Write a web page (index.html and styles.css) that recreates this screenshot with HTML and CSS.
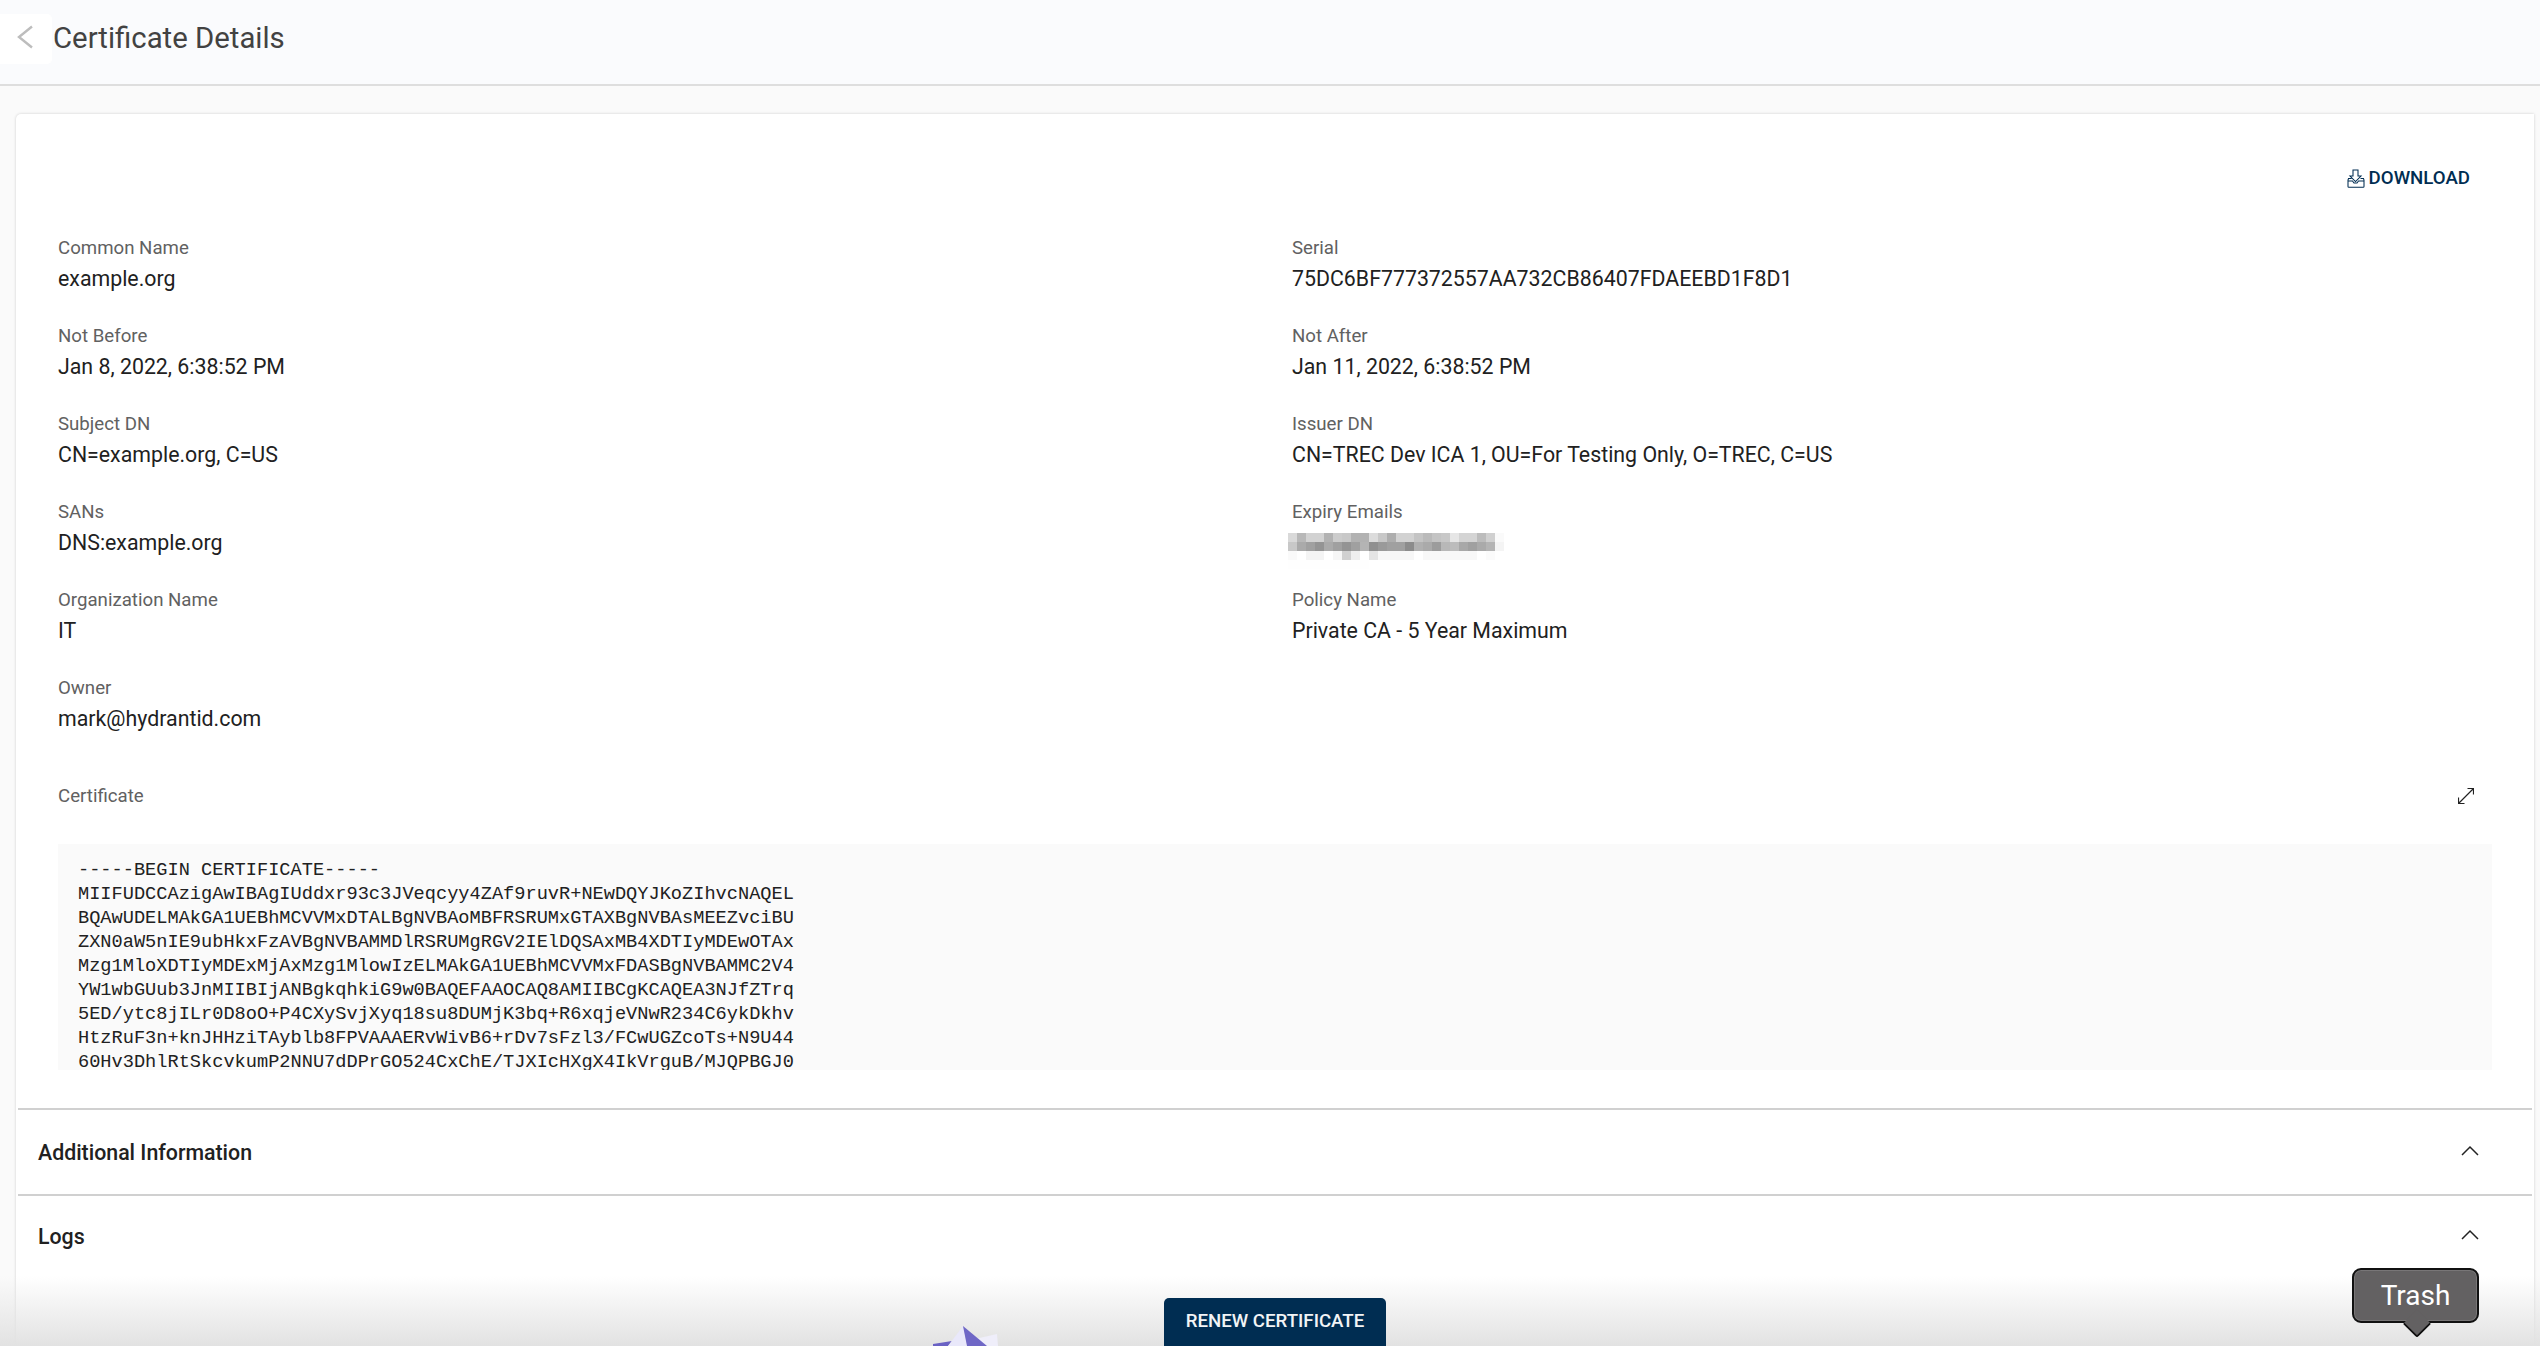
FILE: index.html
```html
<!DOCTYPE html>
<html lang="en">
<head>
<meta charset="utf-8">
<title>Certificate Details</title>
<link rel="stylesheet" href="styles.css">
</head>
<body>
<header class="topbar">
  <button class="back" aria-label="Back">
    <svg width="16" height="24" viewBox="0 0 16 24"><path d="M15 1.500 2 12 15 22.500" fill="none" stroke="#bdbdbd" stroke-width="2.400"/></svg>
  </button>
  <h1 class="title">Certificate Details</h1>
</header>
<main class="card">
  <div class="actions">
    <a class="download">
      <svg width="18" height="19" viewBox="0 0 18 19"><path d="M6 1h5v6h3l-5.500 5.500L3 7h3zM4.500 9.500H1.500L1 11v6.500q0 .8.8.8h14.400q.8 0 .8-.8V11l-.5-1.500h-3M1 12h4.500l1.500 2h3l1.500-2H17" fill="none" stroke="#002d52" stroke-width="1.050"/></svg>
      DOWNLOAD
    </a>
  </div>
  <section class="fields">
    <div class="field"><div class="label">Common Name</div><div class="value">example.org</div></div>
    <div class="field"><div class="label">Serial</div><div class="value">75DC6BF777372557AA732CB86407FDAEEBD1F8D1</div></div>
    <div class="field"><div class="label">Not Before</div><div class="value">Jan 8, 2022, 6:38:52 PM</div></div>
    <div class="field"><div class="label">Not After</div><div class="value">Jan 11, 2022, 6:38:52 PM</div></div>
    <div class="field"><div class="label">Subject DN</div><div class="value">CN=example.org, C=US</div></div>
    <div class="field"><div class="label">Issuer DN</div><div class="value">CN=TREC Dev ICA 1, OU=For Testing Only, O=TREC, C=US</div></div>
    <div class="field"><div class="label">SANs</div><div class="value">DNS:example.org</div></div>
    <div class="field"><div class="label">Expiry Emails</div><div class="redacted">
      <svg width="216" height="36" viewBox="0 0 24 4" shape-rendering="crispEdges">
        <rect x="0" y="0" width="1" height="1" fill="#d9d9d9"/><rect x="1" y="0" width="1" height="1" fill="#b8b8b8"/><rect x="2" y="0" width="2" height="1" fill="#d2d2d2"/><rect x="4" y="0" width="1" height="1" fill="#b2b2b2"/><rect x="5" y="0" width="1" height="1" fill="#cccccc"/><rect x="6" y="0" width="1" height="1" fill="#c8c8c8"/><rect x="7" y="0" width="2" height="1" fill="#b2b2b2"/><rect x="9" y="0" width="1" height="1" fill="#dcdcdc"/><rect x="10" y="0" width="1" height="1" fill="#c8c8c8"/><rect x="11" y="0" width="1" height="1" fill="#aeaeae"/><rect x="12" y="0" width="2" height="1" fill="#d2d2d2"/><rect x="14" y="0" width="1" height="1" fill="#c4c4c4"/><rect x="15" y="0" width="1" height="1" fill="#bababa"/><rect x="16" y="0" width="1" height="1" fill="#c4c4c4"/><rect x="17" y="0" width="1" height="1" fill="#c8c8c8"/><rect x="18" y="0" width="1" height="1" fill="#e6e6e6"/><rect x="19" y="0" width="2" height="1" fill="#d4d4d4"/><rect x="21" y="0" width="1" height="1" fill="#bcbcbc"/><rect x="22" y="0" width="1" height="1" fill="#d0d0d0"/><rect x="23" y="0" width="1" height="1" fill="#fafafa"/>
        <rect x="0" y="1" width="1" height="1" fill="#c8c8c8"/><rect x="1" y="1" width="1" height="1" fill="#aaaaaa"/><rect x="2" y="1" width="1" height="1" fill="#a0a0a0"/><rect x="3" y="1" width="1" height="1" fill="#949494"/><rect x="4" y="1" width="1" height="1" fill="#aaaaaa"/><rect x="5" y="1" width="1" height="1" fill="#a0a0a0"/><rect x="6" y="1" width="1" height="1" fill="#949494"/><rect x="7" y="1" width="1" height="1" fill="#a0a0a0"/><rect x="8" y="1" width="1" height="1" fill="#b4b4b4"/><rect x="9" y="1" width="1" height="1" fill="#909090"/><rect x="10" y="1" width="1" height="1" fill="#9a9a9a"/><rect x="11" y="1" width="2" height="1" fill="#a0a0a0"/><rect x="13" y="1" width="1" height="1" fill="#8c8c8c"/><rect x="14" y="1" width="1" height="1" fill="#b0b0b0"/><rect x="15" y="1" width="1" height="1" fill="#aaaaaa"/><rect x="16" y="1" width="1" height="1" fill="#9c9c9c"/><rect x="17" y="1" width="1" height="1" fill="#b8b8b8"/><rect x="18" y="1" width="1" height="1" fill="#bcbcbc"/><rect x="19" y="1" width="1" height="1" fill="#a8a8a8"/><rect x="20" y="1" width="1" height="1" fill="#a0a0a0"/><rect x="21" y="1" width="1" height="1" fill="#aaaaaa"/><rect x="22" y="1" width="1" height="1" fill="#b4b4b4"/><rect x="23" y="1" width="1" height="1" fill="#f4f4f4"/>
        <rect x="0" y="2" width="1" height="1" fill="#fafafa"/><rect x="2" y="2" width="2" height="1" fill="#f4f4f4"/><rect x="5" y="2" width="1" height="1" fill="#f6f6f6"/><rect x="6" y="2" width="1" height="1" fill="#d0d0d0"/><rect x="7" y="2" width="1" height="1" fill="#eeeeee"/><rect x="9" y="2" width="1" height="1" fill="#e4e4e4"/><rect x="10" y="2" width="4" height="1" fill="#f7f7f7"/><rect x="15" y="2" width="6" height="1" fill="#f8f8f8"/><rect x="22" y="2" width="1" height="1" fill="#fbfbfb"/>
        <rect x="0" y="3" width="9" height="1" fill="#fefefe"/>
      </svg>
    </div></div>
    <div class="field"><div class="label">Organization Name</div><div class="value">IT</div></div>
    <div class="field"><div class="label">Policy Name</div><div class="value">Private CA - 5 Year Maximum</div></div>
    <div class="field"><div class="label">Owner</div><div class="value">mark@hydrantid.com</div></div>
  </section>
  <section class="certificate">
    <div class="cert-head">
      <div class="label">Certificate</div>
      <svg class="expand" width="16" height="16" viewBox="0 0 16 16"><path d="M.5 15.500l15-15M9.500.5h6v6M.5 9.500v6h6" fill="none" stroke="#222" stroke-width="1.200"/></svg>
    </div>
    <pre class="pem">-----BEGIN CERTIFICATE-----
MIIFUDCCAzigAwIBAgIUddxr93c3JVeqcyy4ZAf9ruvR+NEwDQYJKoZIhvcNAQEL
BQAwUDELMAkGA1UEBhMCVVMxDTALBgNVBAoMBFRSRUMxGTAXBgNVBAsMEEZvciBU
ZXN0aW5nIE9ubHkxFzAVBgNVBAMMDlRSRUMgRGV2IElDQSAxMB4XDTIyMDEwOTAx
Mzg1MloXDTIyMDExMjAxMzg1MlowIzELMAkGA1UEBhMCVVMxFDASBgNVBAMMC2V4
YW1wbGUub3JnMIIBIjANBgkqhkiG9w0BAQEFAAOCAQ8AMIIBCgKCAQEA3NJfZTrq
5ED/ytc8jILr0D8oO+P4CXySvjXyq18su8DUMjK3bq+R6xqjeVNwR234C6ykDkhv
HtzRuF3n+knJHHziTAyblb8FPVAAAERvWivB6+rDv7sFzl3/FCwUGZcoTs+N9U44
60Hv3DhlRtSkcvkumP2NNU7dDPrGO524CxChE/TJXIcHXgX4IkVrguB/MJQPBGJ0</pre>
  </section>
  <section class="panel"><h2>Additional Information</h2><svg class="chev" width="18" height="11" viewBox="0 0 18 11"><path d="M1 10 9 2l8 8" fill="none" stroke="#222" stroke-width="1.500"/></svg></section>
  <section class="panel"><h2>Logs</h2><svg class="chev" width="18" height="11" viewBox="0 0 18 11"><path d="M1 10 9 2l8 8" fill="none" stroke="#222" stroke-width="1.500"/></svg></section>
</main>
<div class="fade"></div>
<button class="renew">RENEW CERTIFICATE</button>
<svg class="dock-icon" width="66" height="20" viewBox="0 0 66 20"><path d="M0 18 19 15 15 20H0z" fill="#6a62c4"/><path d="M42 13 64 8 65 20H48z" fill="#efeefa"/><path d="M15 20 30 0 34 20z" fill="#e9e8fa"/><path d="M30 0 54 20H34z" fill="#6f67c6"/></svg>
<div class="tooltip">Trash</div>
</body>
</html>
```
FILE: styles.css
```css
* { box-sizing: border-box; }
html, body { margin: 0; height: 100%; overflow: hidden; }
body { background: #fafafa; font-family: Roboto, sans-serif; color: #212121; position: relative; }
.topbar { height: 86px; background: #fafbfd; border-bottom: 2px solid #dedede; display: flex; align-items: flex-start; padding-top: 14px; }
.back { width: 52px; height: 50px; background: #fff; border: 0; border-radius: 0 5px 5px 0; padding: 0 0 4px 17px; display: flex; align-items: center; }
.title { margin: 3px 0 0 1px; font-size: 29.330px; line-height: 42px; font-weight: 400; color: #424242; }
.card { margin: 28px 6px 0 16px; background: #fff; border-radius: 5px 0 0 0; box-shadow: 0 0 3px rgba(0,0,0,.18); height: 1232px; padding-top: 46px; }
.actions { display: flex; justify-content: flex-end; padding-right: 58px; height: 42px; }
.download { display: flex; align-items: center; gap: 4px; height: 36px; padding: 0 6px; font-size: 18.670px; font-weight: 500; color: #002d52; }
.fields { display: grid; grid-template-columns: 1234px 1fr; grid-auto-rows: 88px; padding: 0 0 0 42px; margin-top: 32px; }
.label { font-size: 18.670px; line-height: 28px; color: #616161; }
.value { font-size: 21.330px; line-height: 32px; color: #212121; padding-top: 1px; }
.redacted { height: 32px; margin: 0 0 0 -4px; }
.redacted svg { display: block; margin-top: 7px; }
.certificate { padding: 0 42px; }
.cert-head { display: flex; justify-content: space-between; align-items: flex-start; height: 82px; padding: 20px 18px 0 0; }
.expand { margin-top: 6px; }
.pem { margin: 0; height: 226px; overflow: hidden; background: #fafafa; padding: 14px 20px 0; font-family: "Liberation Mono", monospace; font-size: 18.650px; line-height: 24px; color: #212121; }
.panel { margin: 38px 2px 0 2px; height: 86px; border-top: 2px solid #d0d0d0; display: flex; align-items: center; justify-content: space-between; padding: 0 53px 0 20px; }
.panel + .panel { margin-top: 0; height: 82px; }
.panel h2 { margin: 0; font-size: 21.330px; font-weight: 500; color: #212121; }
.chev { margin-top: -4px; }
.fade { position: absolute; left: 0; right: 0; bottom: 0; height: 70px; background: linear-gradient(to bottom, rgba(228,228,228,0), #e2e2e2); }
.renew { position: absolute; left: 1164px; top: 1298px; width: 222px; height: 52px; background: #002d52; color: #f2f4f6; border: 0; border-radius: 5px; font-family: Roboto, sans-serif; font-size: 18.670px; font-weight: 500; text-align: center; padding: 0 0 6px; }
.dock-icon { position: absolute; left: 933px; top: 1326px; }
.tooltip { position: absolute; left: 2352px; top: 1268px; width: 127px; height: 55px; background: #636162; border: 2px solid #111; border-radius: 9px; box-shadow: inset 0 0 0 1px #787677; color: #fff; font-size: 28px; display: flex; align-items: center; justify-content: center; }
.tooltip::after { content: ""; position: absolute; left: 50%; bottom: -13px; width: 18px; height: 18px; margin-left: -9px; background: #636162; border: solid #111; border-width: 0 2px 2px 0; border-radius: 0 0 3px 0; transform: rotate(45deg); }
```
